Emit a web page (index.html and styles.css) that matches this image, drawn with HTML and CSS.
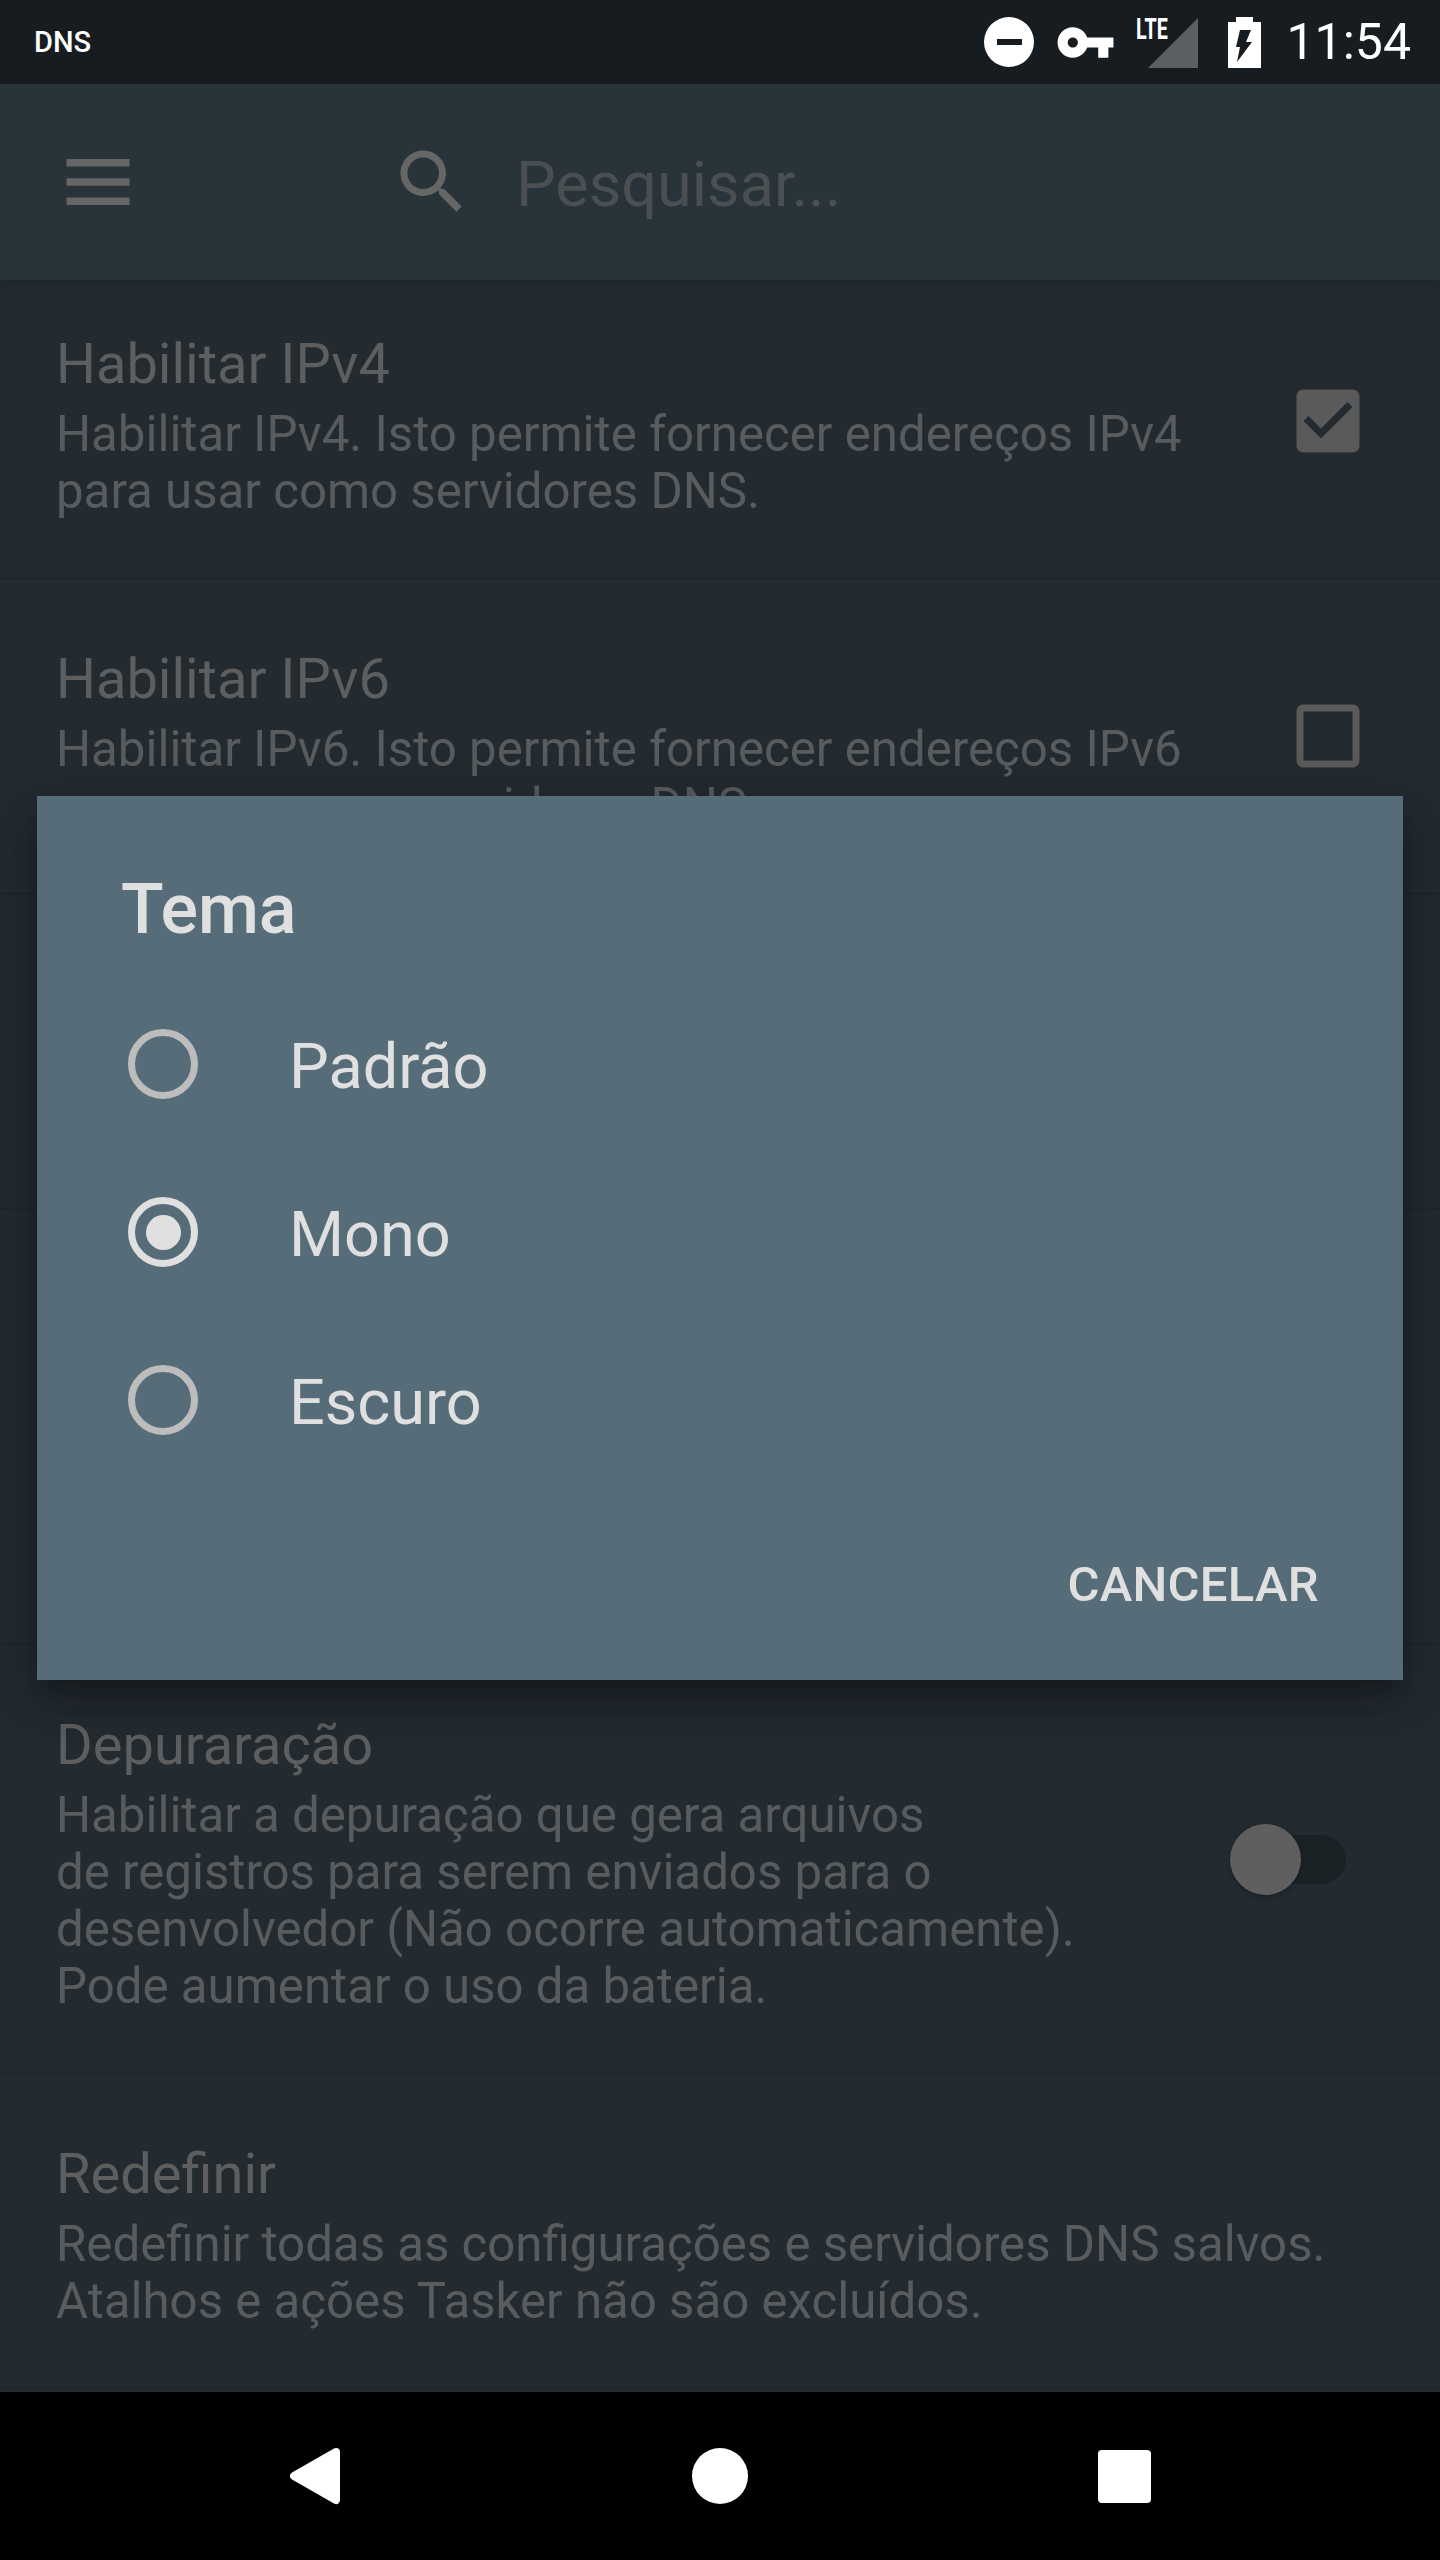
FILE: index.html
```html
<!DOCTYPE html>
<html lang="pt-BR">
<head>
  <meta charset="UTF-8">
  <title>DNS - Tema</title>
  <link rel="stylesheet" href="styles.css">
</head>
<body>
  <div class="tela">
    <div class="status">
      <span class="status-app">DNS</span>
      <div class="status-icons">
        <svg class="ic-dnd" viewBox="0 0 50 50"><path fill="#fff" fill-rule="evenodd" d="M25 0a25 25 0 1 0 0 50a25 25 0 1 0 0-50zM13 22h25v6H13z"/></svg>
        <svg class="ic-key" viewBox="0 0 24 24"><path fill="#fff" d="M12.65 10C11.83 7.67 9.61 6 7 6c-3.31 0-6 2.69-6 6s2.69 6 6 6c2.61 0 4.83-1.67 5.65-4H17v4h4v-4h2v-4H12.65zM7 14c-1.1 0-2-.9-2-2s.9-2 2-2 2 .9 2 2-.9 2-2 2z"/></svg>
        <div class="ic-signal">
          <span class="lte">LTE</span>
          <svg viewBox="0 0 62 51"><path fill="#5a6063" d="M12 51H62V1z"/></svg>
        </div>
        <svg class="ic-bat" viewBox="0 0 33 51"><path fill="#fff" d="M8 0h17v5h8v46H0V5h8z"/><path fill="#171c20" d="M12 13h11l-5 12h6L9 45l3-15H8z"/></svg>
        <span class="status-time">11:54</span>
      </div>
    </div>

    <div class="toolbar">
      <svg class="ic-menu" viewBox="0 0 24 24"><path d="M3 18.6h18v-2.2H3zm0-5.5h18v-2.2H3zM3 5.400v2.200h18V5.400z"/></svg>
      <svg class="ic-search" viewBox="0 0 24 24"><path d="M15.500 14h-.79l-.28-.27C15.410 12.590 16 11.110 16 9.500 16 5.910 13.090 3 9.500 3S3 5.910 3 9.500 5.910 16 9.500 16c1.610 0 3.090-.59 4.230-1.570l.27.28v.79l5 4.990L20.490 19l-4.990-5zm-6 0C7.010 14 5 11.990 5 9.500S7.010 5 9.500 5 14 7.010 14 9.500 11.990 14 9.500 14z"/></svg>
      <span class="busca">Pesquisar...</span>
    </div>

    <div class="lista">
      <div class="item">
        <div class="item-texto">
          <div class="item-titulo">Habilitar IPv4</div>
          <div class="item-desc">Habilitar IPv4. Isto permite fornecer endereços IPv4<br>para usar como servidores DNS.</div>
        </div>
        <svg class="check" viewBox="0 0 24 24"><path d="M19 3H5c-1.110 0-2 .9-2 2v14c0 1.100.89 2 2 2h14c1.110 0 2-.9 2-2V5c0-1.110-.89-2-2-2zm-9 14l-5-5 1.410-1.410L10 14.170l7.590-7.590L19 8l-9 9z"/></svg>
      </div>
      <div class="item">
        <div class="item-texto">
          <div class="item-titulo">Habilitar IPv6</div>
          <div class="item-desc">Habilitar IPv6. Isto permite fornecer endereços IPv6<br>para usar como servidores DNS.</div>
        </div>
        <svg class="check" viewBox="0 0 24 24"><path d="M19 5v14H5V5h14m0-2H5c-1.100 0-2 .9-2 2v14c0 1.100.9 2 2 2h14c1.100 0 2-.9 2-2V5c0-1.100-.9-2-2-2z"/></svg>
      </div>
      <!-- linhas que ficam totalmente atras do dialogo -->
      <div class="item"></div>
      <div class="item item-alto"></div>
      <div class="item item-depurar">
        <div class="item-texto">
          <div class="item-titulo">Depuraração</div>
          <div class="item-desc">Habilitar a depuração que gera arquivos<br>de registros para serem enviados para o<br>desenvolvedor (Não ocorre automaticamente).<br>Pode aumentar o uso da bateria.</div>
        </div>
        <div class="toggle"><span class="toggle-bola"></span></div>
      </div>
      <div class="item">
        <div class="item-texto">
          <div class="item-titulo">Redefinir</div>
          <div class="item-desc">Redefinir todas as configurações e servidores DNS salvos.<br>Atalhos e ações Tasker não são excluídos.</div>
        </div>
      </div>
    </div>

    <div class="nav">
      <svg class="nav-back" viewBox="0 0 52 58"><path d="M47 5L5 29l42 24z"/></svg>
      <span class="nav-home"></span>
      <span class="nav-recent"></span>
    </div>

    <div class="dialogo">
      <div class="dialogo-titulo">Tema</div>
      <div class="opcao"><span class="radio"></span><span class="opcao-texto">Padrão</span></div>
      <div class="opcao"><span class="radio radio-on"></span><span class="opcao-texto">Mono</span></div>
      <div class="opcao"><span class="radio"></span><span class="opcao-texto">Escuro</span></div>
      <div class="dialogo-acoes"><span class="botao">CANCELAR</span></div>
    </div>
  </div>
</body>
</html>
```

FILE: styles.css
```css
body {
  margin: 0;
  background: #232b31;
  font-family: Roboto, sans-serif;
}

.tela {
  position: relative;
  width: 1440px;
  height: 2560px;
  display: flex;
  flex-direction: column;
  overflow: hidden;
  background: #232b31;
}

/* STATUS BAR */
.status {
  height: 84px;
  flex: none;
  display: flex;
  align-items: center;
  justify-content: space-between;
  padding: 0 29px 0 34px;
  background: #171c20;
  color: #fff;
  position: relative;
  z-index: 2;
}

.status-app {
  font-size: 29px;
  font-weight: 500;
}

.status-icons {
  display: flex;
  align-items: center;
}

.ic-dnd {
  width: 50px;
  height: 50px;
  margin-right: 21px;
}

.ic-key {
  width: 61px;
  height: 61px;
  margin-right: 20px;
}

.ic-signal {
  position: relative;
  width: 62px;
  height: 51px;
  margin-right: 30px;
}

.ic-signal svg {
  display: block;
  width: 62px;
  height: 51px;
}

.lte {
  position: absolute;
  left: 0;
  top: -3px;
  font-size: 29px;
  line-height: 30px;
  font-weight: 700;
  transform: scaleX(0.68);
  transform-origin: left center;
}

.ic-bat {
  width: 33px;
  height: 51px;
  margin-right: 25px;
}

.status-time {
  font-size: 50px;
}

/* TOOLBAR */
.toolbar {
  height: 196px;
  flex: none;
  display: flex;
  align-items: center;
  padding-left: 56px;
  background: #28333a;
  box-shadow: 0 4px 12px rgba(0, 0, 0, 0.16);
  position: relative;
  z-index: 1;
}

.toolbar svg {
  fill: #666;
  width: 84px;
  height: 84px;
  flex: none;
}

.ic-search {
  margin-left: 250px;
}

.busca {
  margin-left: 42px;
  padding-top: 4px;
  font-size: 63px;
  color: #4a4f52;
}

/* LISTA */
.lista {
  flex: 1;
  margin-top: -15px;
  overflow: hidden;
}

.item {
  box-sizing: border-box;
  height: 315px;
  display: flex;
  align-items: center;
  justify-content: space-between;
  padding: 0 70px 0 56px;
  border-bottom: 3px solid #20272c;
}

.item-alto {
  height: 436px;
}

.item-depurar {
  height: 429px;
}

.item-texto {
  padding-top: 10px;
}

.item-titulo {
  font-size: 56px;
  line-height: 64px;
  margin-bottom: 10px;
  color: #5c5e5f;
}

.item-desc {
  font-size: 49.2px;
  line-height: 57px;
  color: #595c5e;
}

.check {
  width: 84px;
  height: 84px;
  fill: #5a5a5a;
  flex: none;
}

.toggle {
  position: relative;
  width: 102px;
  height: 49px;
  margin-right: 24px;
  border-radius: 25px;
  background: #1b2225;
}

.toggle-bola {
  position: absolute;
  left: -14px;
  top: -11px;
  width: 71px;
  height: 71px;
  border-radius: 50%;
  background: #5f5f5f;
  box-shadow: 0 2px 5px rgba(0, 0, 0, 0.3);
}

/* NAV */
.nav {
  height: 168px;
  flex: none;
  display: grid;
  grid-template-columns: repeat(3, 405px);
  justify-items: center;
  align-items: center;
  padding: 0 112px;
  background: #000;
  position: relative;
  z-index: 2;
}

.nav-back {
  width: 52px;
  height: 58px;
  fill: #fff;
  stroke: #fff;
  stroke-width: 8;
  stroke-linejoin: round;
}

.nav-home {
  width: 56px;
  height: 56px;
  border-radius: 50%;
  background: #fff;
}

.nav-recent {
  width: 53px;
  height: 53px;
  border-radius: 4px;
  background: #fff;
}

/* DIALOGO */
.dialogo {
  position: absolute;
  left: 37px;
  top: 796px;
  width: 1366px;
  height: 884px;
  box-sizing: border-box;
  padding: 72px 0 0 85px;
  background: #566d79;
  color: #e0e0e0;
  box-shadow: 0 24px 38px 3px rgba(0, 0, 0, 0.2), 0 9px 46px 8px rgba(0, 0, 0, 0.12), 0 11px 15px -7px rgba(0, 0, 0, 0.2);
  z-index: 3;
}

.dialogo-titulo {
  margin-left: -1px;
  font-size: 70px;
  font-weight: 500;
  line-height: 82px;
  margin-bottom: 30px;
}

.opcao {
  height: 168px;
  display: flex;
  align-items: center;
  font-size: 63px;
}

.opcao-texto {
  padding-top: 4px;
}

.radio {
  box-sizing: border-box;
  width: 70px;
  height: 70px;
  margin: 0 91px 0 6px;
  border: 7px solid #bdbdbd;
  border-radius: 50%;
  display: flex;
  align-items: center;
  justify-content: center;
}

.radio-on {
  border-color: #e0e0e0;
}

.radio-on::after {
  content: "";
  width: 35px;
  height: 35px;
  border-radius: 50%;
  background: #e0e0e0;
}

.dialogo-acoes {
  display: flex;
  justify-content: flex-end;
  padding: 72px 84px 0 0;
}

.botao {
  font-size: 49px;
  font-weight: 500;
  letter-spacing: 0.3px;
}
```
